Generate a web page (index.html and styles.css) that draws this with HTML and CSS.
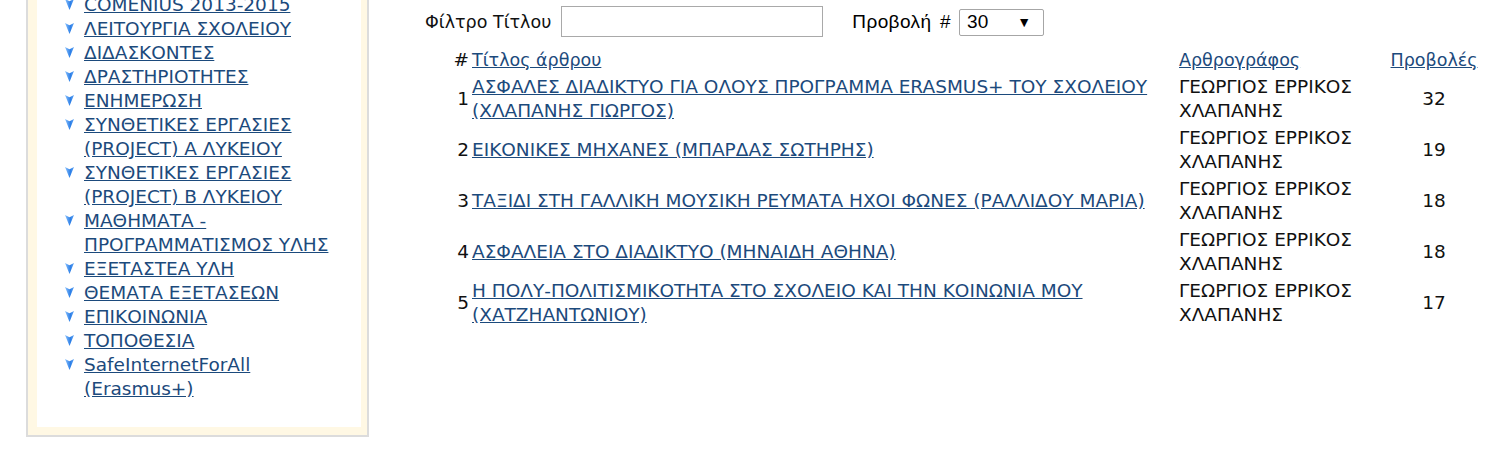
FILE: index.html
```html
<!DOCTYPE html>
<html lang="el">
<head>
<meta charset="utf-8">
<title>Άρθρα</title>
<link rel="stylesheet" href="styles.css">
</head>
<body>
<div class="page">
  <aside class="sidebar">
    <div class="box">
      <div class="inner">
        <ul class="menu">
          <li><a href="#">COMENIUS 2013-2015</a></li>
          <li><a href="#">ΛΕΙΤΟΥΡΓΙΑ ΣΧΟΛΕΙΟΥ</a></li>
          <li><a href="#">ΔΙΔΑΣΚΟΝΤΕΣ</a></li>
          <li><a href="#">ΔΡΑΣΤΗΡΙΟΤΗΤΕΣ</a></li>
          <li><a href="#">ΕΝΗΜΕΡΩΣΗ</a></li>
          <li><a href="#">ΣΥΝΘΕΤΙΚΕΣ ΕΡΓΑΣΙΕΣ (PROJECT) Α ΛΥΚΕΙΟΥ</a></li>
          <li><a href="#">ΣΥΝΘΕΤΙΚΕΣ ΕΡΓΑΣΙΕΣ (PROJECT) Β ΛΥΚΕΙΟΥ</a></li>
          <li><a href="#">ΜΑΘΗΜΑΤΑ - ΠΡΟΓΡΑΜΜΑΤΙΣΜΟΣ ΥΛΗΣ</a></li>
          <li><a href="#">ΕΞΕΤΑΣΤΕΑ ΥΛΗ</a></li>
          <li><a href="#">ΘΕΜΑΤΑ ΕΞΕΤΑΣΕΩΝ</a></li>
          <li><a href="#">ΕΠΙΚΟΙΝΩΝΙΑ</a></li>
          <li><a href="#">ΤΟΠΟΘΕΣΙΑ</a></li>
          <li><a href="#">SafeInternetForAll (Erasmus+)</a></li>
        </ul>
      </div>
    </div>
  </aside>
  <main class="main">
    <form class="filters">
      <label class="filter-label lc" for="f">Φίλτρο Τίτλου</label>
      <input class="filter-input" id="f" type="text">
      <span class="limit-label">Προβολή #</span>
      <span class="select"><span class="select-val">30</span><span class="select-arrow">▼</span></span>
    </form>
    <table class="articles">
      <colgroup>
        <col class="c-num"><col class="c-title"><col class="c-author"><col class="c-hits">
      </colgroup>
      <thead>
        <tr><th class="num">#</th><th class="title lc"><a href="#">Τίτλος άρθρου</a></th><th class="author lc"><a href="#">Αρθρογράφος</a></th><th class="hits lc"><a href="#">Προβολές</a></th></tr>
      </thead>
      <tbody>
        <tr><td class="num">1</td><td class="title"><a href="#">ΑΣΦΑΛΕΣ ΔΙΑΔΙΚΤΥΟ ΓΙΑ ΟΛΟΥΣ ΠΡΟΓΡΑΜΜΑ ERASMUS+ ΤΟΥ ΣΧΟΛΕΙΟΥ (ΧΛΑΠΑΝΗΣ ΓΙΩΡΓΟΣ)</a></td><td class="author">ΓΕΩΡΓΙΟΣ ΕΡΡΙΚΟΣ ΧΛΑΠΑΝΗΣ</td><td class="hits">32</td></tr>
        <tr><td class="num">2</td><td class="title"><a href="#">ΕΙΚΟΝΙΚΕΣ ΜΗΧΑΝΕΣ (ΜΠΑΡΔΑΣ ΣΩΤΗΡΗΣ)</a></td><td class="author">ΓΕΩΡΓΙΟΣ ΕΡΡΙΚΟΣ ΧΛΑΠΑΝΗΣ</td><td class="hits">19</td></tr>
        <tr><td class="num">3</td><td class="title"><a href="#">ΤΑΞΙΔΙ ΣΤΗ ΓΑΛΛΙΚΗ ΜΟΥΣΙΚΗ ΡΕΥΜΑΤΑ ΗΧΟΙ ΦΩΝΕΣ (ΡΑΛΛΙΔΟΥ ΜΑΡΙΑ)</a></td><td class="author">ΓΕΩΡΓΙΟΣ ΕΡΡΙΚΟΣ ΧΛΑΠΑΝΗΣ</td><td class="hits">18</td></tr>
        <tr><td class="num">4</td><td class="title"><a href="#">ΑΣΦΑΛΕΙΑ ΣΤΟ ΔΙΑΔΙΚΤΥΟ (ΜΗΝΑΙΔΗ ΑΘΗΝΑ)</a></td><td class="author">ΓΕΩΡΓΙΟΣ ΕΡΡΙΚΟΣ ΧΛΑΠΑΝΗΣ</td><td class="hits">18</td></tr>
        <tr><td class="num">5</td><td class="title"><a href="#">Η ΠΟΛΥ-ΠΟΛΙΤΙΣΜΙΚΟΤΗΤΑ ΣΤΟ ΣΧΟΛΕΙΟ ΚΑΙ ΤΗΝ ΚΟΙΝΩΝΙΑ ΜΟΥ (ΧΑΤΖΗΑΝΤΩΝΙΟΥ)</a></td><td class="author">ΓΕΩΡΓΙΟΣ ΕΡΡΙΚΟΣ ΧΛΑΠΑΝΗΣ</td><td class="hits">17</td></tr>
      </tbody>
    </table>
  </main>
</div>
</body>
</html>
```
FILE: styles.css
```css
html, body {
  margin: 0;
  padding: 0;
  background: #fff;
}
body {
  font-family: "DejaVu Sans", "Noto Sans", sans-serif;
  font-size: 18.5px;
  line-height: 24px;
  color: #111;
  overflow: hidden;
}
a {
  color: #1c4a7c;
  text-decoration: underline;
}
.lc {
  font-size: 17.5px;
}
.page {
  display: flex;
  align-items: flex-start;
}
.sidebar {
  width: 343px;
  margin-left: 26px;
  margin-top: -30px;
  flex: none;
}
.box {
  border: 2px solid #dcdcdc;
  border-top-color: #e6e6e6;
  background: #fff8e4;
  padding: 8px 6px 8px 9px;
}
.inner {
  background: #fff;
  padding: 13px 14px 26px 27px;
}
.menu {
  list-style: none;
  margin: 0;
  padding: 0;
}
.menu li {
  position: relative;
  padding-left: 20px;
}
.menu li::before {
  content: "";
  position: absolute;
  left: 1px;
  top: 6px;
  width: 9px;
  height: 11px;
  background: linear-gradient(90deg, #8cc3ff, #2d7fe6 60%, #5fa4f5);
  clip-path: polygon(0 0, 50% 20%, 100% 0, 50% 100%);
}
.main {
  margin-left: 56px;
  padding-top: 6px;
  flex: 1;
}
.filters {
  display: flex;
  align-items: center;
  height: 31px;
  margin: 0;
}
.filter-label {
  margin-right: 10px;
}
.filter-input {
  width: 262px;
  height: 31px;
  box-sizing: border-box;
  border: 1px solid #a9a9a9;
  margin: 0 29px 0 0;
  padding: 0;
}
.limit-label {
  font-family: "Liberation Sans", Arial, sans-serif;
  font-size: 19px;
  letter-spacing: 0.4px;
  word-spacing: 3px;
  color: #000;
  margin-right: 8px;
}
.select {
  display: flex;
  align-items: center;
  justify-content: space-between;
  width: 85px;
  height: 27px;
  box-sizing: border-box;
  border: 1px solid #a6a6a6;
  border-radius: 2px;
  padding: 0 12px 0 7px;
  font-family: "Liberation Sans", Arial, sans-serif;
  font-size: 19px;
  color: #000;
  margin-top: 1px;
}
.select-arrow {
  font-size: 14px;
}
.articles {
  border-collapse: separate;
  border-spacing: 0 3px;
  margin-top: 8px;
  margin-left: 25px;
}
.articles th, .articles td {
  padding: 0;
  font-weight: normal;
  vertical-align: middle;
}
.articles th {
  text-align: left;
}
.c-num { width: 22px; }
.c-title { width: 707px; }
.c-author { width: 211px; }
.c-hits { width: 88px; }
.num {
  text-align: right;
  padding-right: 3px !important;
}
.articles th.num { text-align: right; }
.author {
  width: 180px;
}
.hits,
.articles th.hits {
  text-align: center;
}
.articles tbody tr {
  height: 48px;
}
```
